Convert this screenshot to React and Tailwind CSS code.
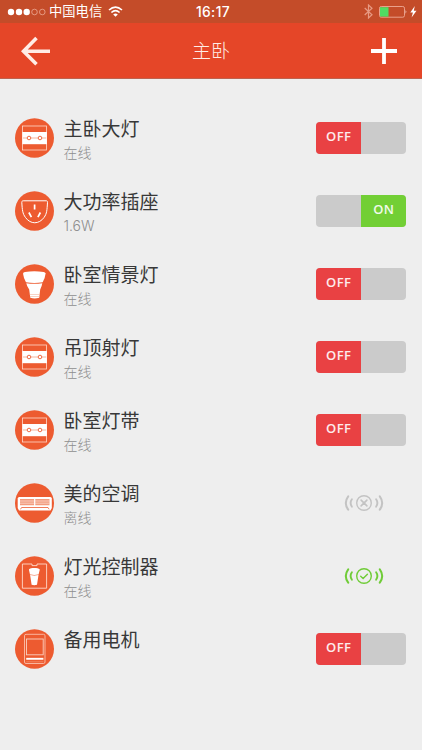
import React from "react";

const WallSwitchIcon = () => (
  <>
    <rect x="7.5" y="8" width="24" height="24" fill="none" stroke="#ffd9cb" strokeWidth="0.8" />
    <rect x="7.3" y="14" width="24.6" height="12.2" fill="#fff" />
    <path d="M8 20h4.2M16 20h7.2M27 20h4.2" stroke="#f3a283" strokeWidth="0.8" />
    <circle cx="14" cy="20" r="1.8" fill="#fff" stroke="#ed5b30" strokeWidth="0.9" />
    <circle cx="25" cy="20" r="1.8" fill="#fff" stroke="#ed5b30" strokeWidth="0.9" />
  </>
);

const SocketIcon = () => (
  <g fill="none" stroke="#fff">
    <path d="M8.2 9.8h23c1 0 1.4.6 1.3 1.5C32 19 32 22.500 29 26.500c-5 7-13.500 7-18.500 0C7.500 22.500 7.300 19 6.800 11.300c0-.9.400-1.500 1.400-1.500z" strokeWidth="1" />
    <path d="M19.600 13.500v5M13.900 21.500l2.500 4.700M25.400 21.500l-2.500 4.700" strokeWidth="1.700" />
  </g>
);

const BulbIcon = () => (
  <>
    <path d="M8 9.500Q8.300 8.200 10 7.900Q19.300 6.500 28.600 7.900Q30.300 8.200 30.600 9.500Q30 14.500 27.700 18.300Q19.300 19.600 11 18.300Q8.600 14.500 8 9.500z" fill="#fff" />
    <path d="M11.300 19.200Q19.300 20.500 27.300 19.200Q26.800 22.500 25.200 25.500L24.200 33.800Q19.500 35.200 15.300 33.800L14.200 25.500Q11.900 22.500 11.300 19.200z" fill="#fff" />
    <path d="M14.800 30.500h10M15 32.500h9.500" stroke="#f4b49c" strokeWidth="0.6" />
  </>
);

const AirConditionerIcon = () => (
  <>
    <path d="M4.300 14h31q1.500 0 1.500 1.500v9.500l-1.300 2.600H4L2.700 25v-9.500q0-1.500 1.600-1.500z" fill="#fff" />
    <path d="M5 16h14.100v6.200H5zM20.300 16h14.200v6.200H20.300z" fill="#f39b7d" />
    <path d="M5 18h29.500M5 20.200h29.500" stroke="#fff" strokeWidth="0.5" />
    <path d="M5.500 26.300l1.100-1.800h26.400l1.100 1.800" stroke="#ed5b30" strokeWidth="0.8" fill="none" />
  </>
);

const LightControllerIcon = () => (
  <>
    <path d="M7.400 8H17v1.600h5V8h9.600v24.200H7.400z" fill="none" stroke="#ffd9cb" strokeWidth="0.9" />
    <path d="M13.900 13.500C15.500 11.600 22.900 11.600 24.800 13.500L23.600 18.600Q19.300 19.400 15 18.600zM15.100 19.100Q19.300 19.900 23.500 19.100L22 28.800Q19.300 29.500 16.600 28.800z" fill="#fff" />
  </>
);

const MotorIcon = () => (
  <>
    <rect x="9.500" y="5.300" width="20.500" height="29.200" rx="1.500" fill="none" stroke="#fbc0aa" strokeWidth="0.9" />
    <rect x="11.500" y="10" width="16.700" height="15.800" fill="none" stroke="#fbd0c0" strokeWidth="0.9" />
    <path d="M11.200 29.800h17.200" stroke="#fff" strokeWidth="1.900" />
    <path d="M11.200 32.800h17.200" stroke="#f6a88d" strokeWidth="0.500" />
  </>
);

const devices = [
  { name: "主卧大灯", status: "在线", Icon: WallSwitchIcon, control: "off" },
  { name: "大功率插座", status: "1.6W", Icon: SocketIcon, control: "on" },
  { name: "卧室情景灯", status: "在线", Icon: BulbIcon, control: "off" },
  { name: "吊顶射灯", status: "在线", Icon: WallSwitchIcon, control: "off" },
  { name: "卧室灯带", status: "在线", Icon: WallSwitchIcon, control: "off" },
  { name: "美的空调", status: "离线", Icon: AirConditionerIcon, control: "offline" },
  { name: "灯光控制器", status: "在线", Icon: LightControllerIcon, control: "online" },
  { name: "备用电机", status: "", Icon: MotorIcon, control: "off" },
];

function Toggle({ on }) {
  return (
    <div className="flex h-8 w-[90px] overflow-hidden rounded-[4px] bg-[#cbcbcb] font-['Open_Sans','Noto_Sans',sans-serif] text-[12px] leading-[30px] font-semibold tracking-[0.4px] text-white/90">
      {on ? (
        <div className="ml-auto w-[45px] bg-[#72cf35] text-center">
          <span className="inline-block scale-x-[1.08]">ON</span>
        </div>
      ) : (
        <div className="w-[45px] bg-[#e94143] text-center">
          <span className="inline-block scale-x-[1.08]">OFF</span>
        </div>
      )}
    </div>
  );
}

function Signal({ online }) {
  return (
    <svg
      width="40"
      height="18"
      viewBox="0 0 40 18"
      fill="none"
      strokeLinecap="round"
      className={online ? "mr-[22px] text-[#70cc38]" : "mr-[22px] text-[#c3c3c3]"}
      stroke="currentColor"
    >
      <path d="M4.200 2.300Q-.6 9 4.200 15.700M35.800 2.300Q40.600 9 35.800 15.700" strokeWidth="2" />
      <path d="M7.900 5.300Q5.300 9 7.900 12.700M32.100 5.300Q34.700 9 32.100 12.700" strokeWidth="1.900" />
      <circle cx="20" cy="9" r="7.300" strokeWidth="1.400" />
      {online ? (
        <path d="M16.700 9.200l2.400 2.300 4.300-4.300" strokeWidth="1.400" />
      ) : (
        <path d="M17.100 6.100l5.800 5.800M22.900 6.100l-5.800 5.800" strokeWidth="1.600" />
      )}
    </svg>
  );
}

function DeviceRow({ device }) {
  const { name, status, Icon, control } = device;
  return (
    <li className="flex h-[73px] items-center pr-4 pl-[15px]">
      <svg width="39" height="40" viewBox="0 0 39 40" className="shrink-0">
        <ellipse cx="19.500" cy="20" rx="19.500" ry="19.800" fill="#ed5b30" />
        <Icon />
      </svg>
      <div className="ml-[9.500px] flex h-[44px] flex-1 flex-col">
        <span className="h-[26px] text-[19px] leading-7 font-normal text-[#383838]">{name}</span>
        <span className="font-[Inter,'Noto_Sans_CJK_SC',sans-serif] text-[14px] leading-[21px] text-[#8f8f8f]">{status}</span>
      </div>
      {control === "on" || control === "off" ? (
        <Toggle on={control === "on"} />
      ) : (
        <Signal online={control === "online"} />
      )}
    </li>
  );
}

function StatusBar() {
  return (
    <div className="grid h-[23px] grid-cols-3 items-center bg-[#c44c29] text-white">
      <div className="flex items-center pl-[7px]">
        <svg width="39" height="8" viewBox="0 0 39 8">
          <g fill="#fff">
            <circle cx="4" cy="4" r="3.200" />
            <circle cx="12" cy="4" r="3.200" />
            <circle cx="19.700" cy="4" r="3.200" />
          </g>
          <g fill="none" stroke="#f2b8a4" strokeWidth="0.700">
            <circle cx="27.500" cy="4" r="2.800" />
            <circle cx="35.300" cy="4" r="2.800" />
          </g>
        </svg>
        <span className="ml-[3px] text-[13.3px] leading-[22px] font-normal whitespace-nowrap">中国电信</span>
        <svg width="15" height="11" viewBox="0 0 15 11" fill="none" stroke="#fff" className="ml-[6px] shrink-0">
          <path d="M1 4Q7.500-1.800 14 4" strokeWidth="1.600" />
          <path d="M3.400 6.500Q7.500 2.900 11.600 6.500" strokeWidth="1.600" />
          <path d="M5.200 8.400Q7.500 6.400 9.800 8.400L7.500 10.800z" fill="#fff" stroke="none" />
        </svg>
      </div>
      <span className="pl-[4px] text-center font-[Inter,'Liberation_Sans',sans-serif] text-[13.800px] leading-[22px] font-medium tracking-[0.400px]">16:17</span>
      <div className="flex items-center justify-end pr-[5px]">
        <svg width="9" height="15" viewBox="0 0 9 15" fill="none" stroke="#e79a83" strokeWidth="1.200" className="mr-[6px]">
          <path d="M.7 4l7.300 6.800L4.500 14V1L8 4.200.7 11" />
        </svg>
        <svg width="28" height="12" viewBox="0 0 28 12">
          <rect x="0.500" y="0.500" width="25" height="10.700" rx="1.700" fill="none" stroke="#eea996" strokeWidth="0.900" />
          <rect x="1" y="1.200" width="8.500" height="9.400" fill="#50dc62" />
          <path d="M26.700 4q1.200 1.800 0 3.800z" fill="#fff" />
        </svg>
        <svg width="7" height="12" viewBox="0 0 7 12" className="ml-[3px]">
          <path d="M4.800 0L.3 6.500h2.600L1.600 11.500 6.500 4.700H3.800z" fill="#fff" />
        </svg>
      </div>
    </div>
  );
}

export default function App() {
  return (
    <div className="h-[750px] w-[422px] overflow-hidden bg-[#eeeeee] font-['Liberation_Sans','Noto_Sans_CJK_SC',sans-serif] font-light">
      <StatusBar />
      <header className="flex h-14 items-center justify-between border-b border-[#bd6350] bg-[#e54628] pr-[25px] pl-[21px] text-[#ffece6]">
        <svg width="30" height="30" viewBox="0 0 30 30" fill="none" stroke="currentColor" strokeWidth="3.600">
          <path d="M29 15.200H3M15.500 2L2.500 15.200 15.500 28.200" />
        </svg>
        <h1 className="pt-[3px] text-[19px] leading-7">主卧</h1>
        <svg width="26" height="26" viewBox="0 0 26 26" stroke="#fff" strokeWidth="3.800">
          <path d="M13 0v26M0 13h26" />
        </svg>
      </header>
      <ul className="pt-[22px]">
        {devices.map((device) => (
          <DeviceRow key={device.name} device={device} />
        ))}
      </ul>
    </div>
  );
}
